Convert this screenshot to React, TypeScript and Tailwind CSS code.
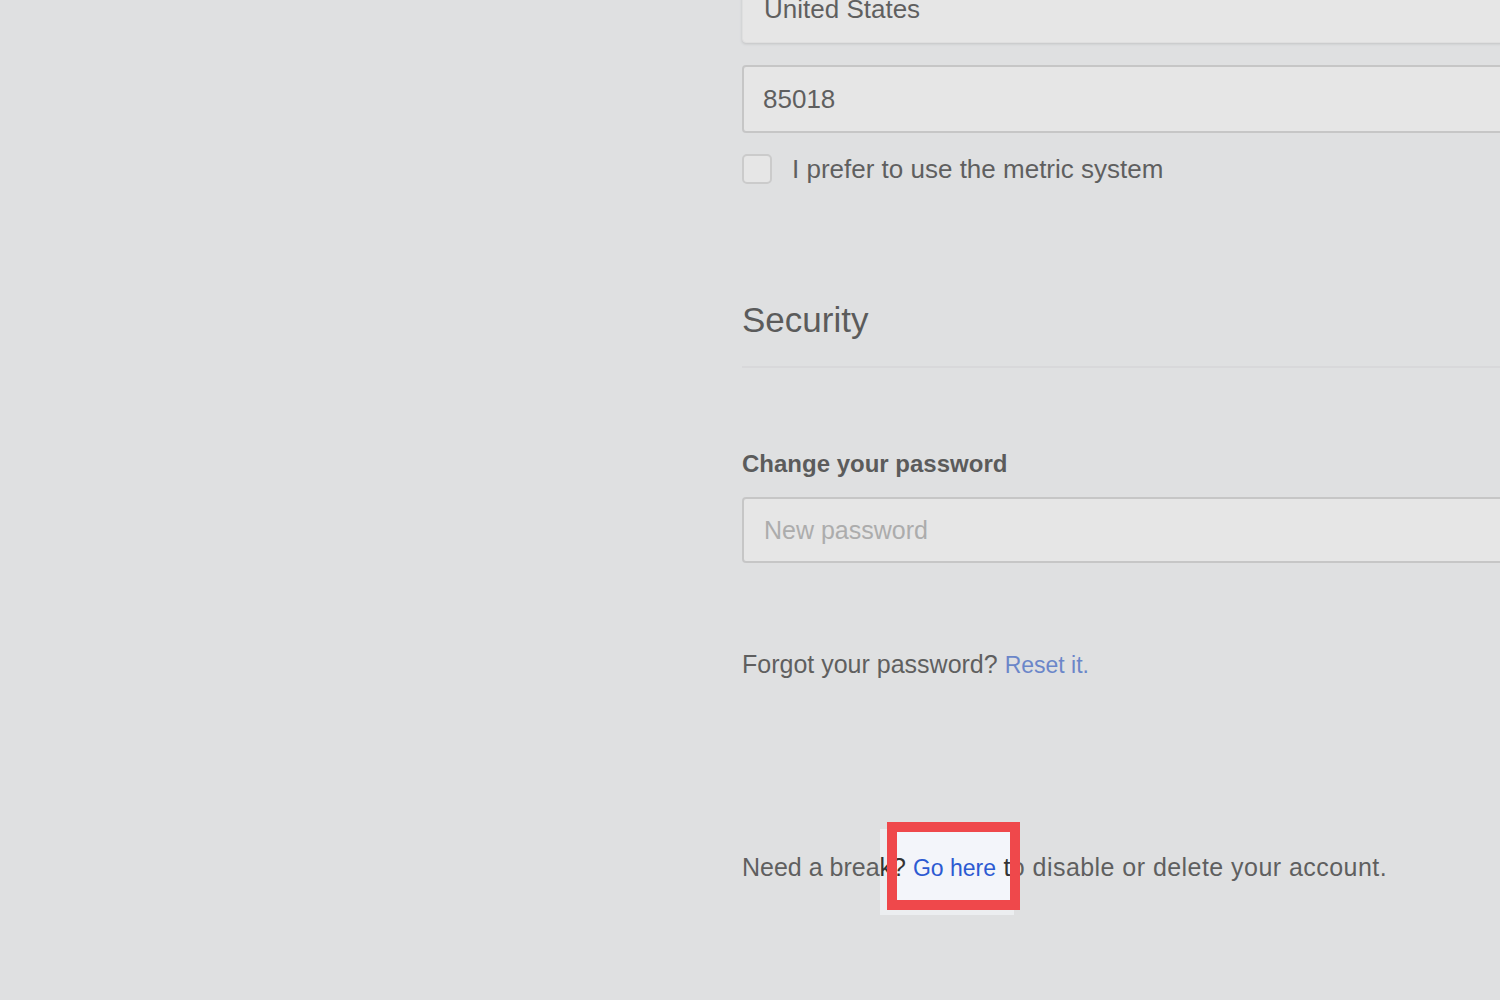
export default function App() {
  return (
    <div className="relative w-[1500px] h-[1000px] overflow-hidden bg-[#eceef0] font-['Liberation_Sans',Arial,sans-serif] text-[#333]">
      {/* highlight fill behind the link */}
      <div className="absolute left-[897px] top-[832px] w-[113px] h-[68px] bg-[#f3f5fa] z-0" />

      <main className="relative z-[1] ml-[742px] w-[900px] flex flex-col">
        {/* country select (scrolled mostly off the top) */}
        <div className="mt-[-25px] h-[68px] flex items-center pl-[21px] bg-[#f6f6f6] border border-[#ececec] rounded-[4px] shadow-[0_1px_3px_rgba(0,0,0,0.18)] text-[26px]">
          United States
        </div>

        <input
          readOnly
          defaultValue="85018"
          className="mt-[22px] h-[68px] pl-[19px] bg-[#f6f6f6] border-2 border-[#c9c9c9] rounded-[4px] text-[26px] text-[#333] outline-none"
        />

        <label className="mt-[21px] h-[30px] flex items-center gap-[20px] text-[26px]">
          <span className="w-[30px] h-[30px] rounded-[5px] border-2 border-[#cfcfcf] bg-[#f6f6f6]" />
          I prefer to use the metric system
        </label>

        <h2 className="mt-[116px] text-[35px] leading-[40px] text-[#2e2e2e]">Security</h2>
        <div className="mt-[26px] h-[2px] bg-[#e2e3e5]" />

        <h3 className="mt-[81px] text-[24px] leading-[30px] font-bold text-[#2e2e2e]">Change your password</h3>
        <input
          type="password"
          placeholder="New password"
          className="mt-[18px] h-[66px] pl-[20px] bg-[#f6f6f6] border-2 border-[#c9c9c9] rounded-[4px] text-[25px] outline-none placeholder:text-[#a3a3a3]"
        />

        <p className="mt-[86px] text-[25px] leading-[30px]">
          Forgot your password? <a className="text-[23px] text-[#446ccc]">Reset it.</a>
        </p>

        <p className="mt-[172px] text-[25px] leading-[30px]">
          Need a break? <a className="text-[23px] text-[#2c5ad2]">Go here</a>
          <span className="tracking-[0.45px]"> to disable or delete your account.</span>
        </p>
      </main>

      {/* tutorial spotlight: dims everything except this box */}
      <div className="absolute left-[880px] top-[829px] w-[134px] h-[86px] z-10 shadow-[0_0_0_3000px_rgba(194,193,195,0.31)]" />
      <div className="absolute left-[887px] top-[822px] w-[133px] h-[88px] z-20 border-[10px] border-[#ef484b]" />
    </div>
  );
}
